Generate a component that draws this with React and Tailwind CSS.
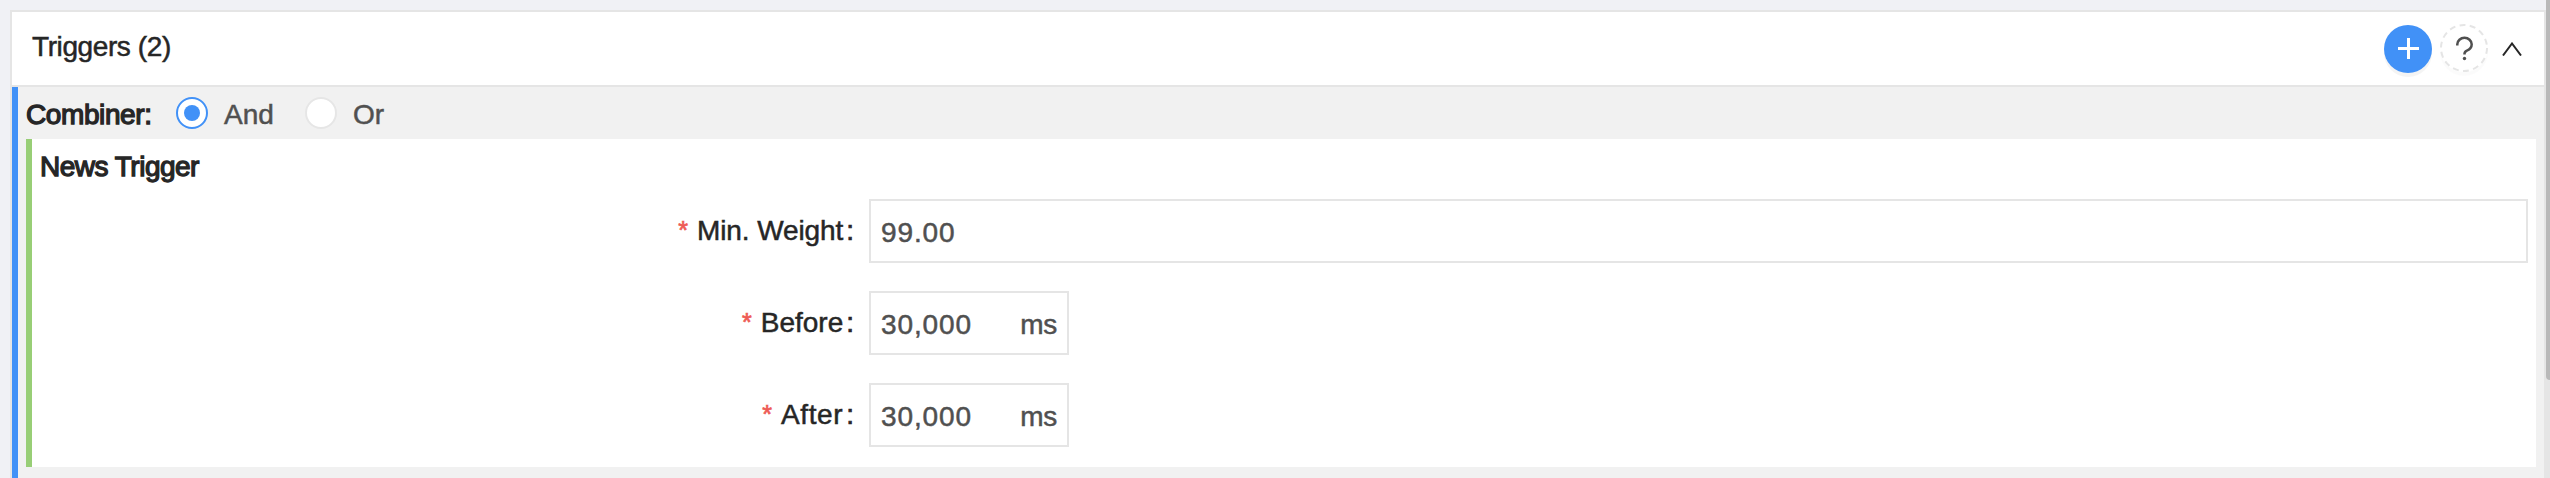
import React, { useState } from 'react';

const COMBINERS = [
  { name: 'And', className: 'mr-[33px] w-[48px]' },
  { name: 'Or', className: '' },
];

const FIELDS = [
  { label: 'Min. Weight', value: '99.00', tracking: 'tracking-[-0.1px]' },
  { label: 'Before', value: '30,000', unit: 'ms', tracking: '' },
  { label: 'After', value: '30,000', unit: 'ms', tracking: 'tracking-[0.6px]' },
];

const Radio = ({ checked }) => (
  <span
    className={`flex h-8 w-8 shrink-0 items-center justify-center rounded-full border-2 bg-white ${
      checked ? 'border-[#4191f7]' : 'border-[#e6e6e6]'
    }`}
  >
    {checked && <span className="h-4 w-4 rounded-full bg-[#4191f7]" />}
  </span>
);

const Field = ({ label, value, unit, tracking }) => (
  <div className="flex h-16">
    <label className="flex w-[837px] shrink-0 items-start justify-end pr-[15px] pt-[12px] leading-10 text-[#262626]">
      <span className="mr-[9px] text-[25px] leading-[38px] text-[#ee5b56] [-webkit-text-stroke:0.7px]">*</span>
      <span className={tracking}>{label}</span>
      <span className="ml-[3px] [-webkit-text-stroke:0.7px]">:</span>
    </label>
    <div
      className={`flex h-16 items-center border-2 border-[#e5e5e5] pl-[10px] pr-[10px] pt-[3px] text-[#505050] ${
        unit ? 'w-[200px] justify-between' : 'w-[1659px]'
      }`}
    >
      <span className="tracking-[0.9px]">{value}</span>
      {unit && <span className="tracking-[-0.3px]">{unit}</span>}
    </div>
  </div>
);

const App = () => {
  const [combiner, setCombiner] = useState('And');

  return (
    <div className="flex h-[478px] w-[2550px] overflow-hidden bg-[#f0f1f5] pl-[10px] font-['Liberation_Sans',Arial,sans-serif] text-[28px] leading-10 [-webkit-text-stroke:0.5px]">
      <div className="mt-[10px] h-[480px] w-[2536px] shrink-0 border-2 border-[#e5e5e5]">
        {/* Header */}
        <div className="flex h-[75px] justify-between border-b-2 border-[#e5e5e5] bg-white pl-5 pr-[22px]">
          <span className="pt-[15px] tracking-[-0.4px] text-[#262626]">Triggers (2)</span>
          <div className="flex items-start">
            <button className="mt-[13px] h-12 w-12 rounded-full bg-[#4191f7] shadow-[0_4px_0_rgba(0,0,0,0.045)]">
              <svg viewBox="0 0 48 48" className="h-12 w-12" fill="none" stroke="#fff" strokeWidth="3">
                <path d="M24.5 13v21M14 23.5h21" />
              </svg>
            </button>
            <button className="ml-2 mt-3 h-12 w-12 rounded-full shadow-[0_4px_0_rgba(0,0,0,0.015)]">
              <svg viewBox="0 0 48 48" className="h-12 w-12" fill="none">
                <circle cx="24" cy="24" r="23" stroke="#e5e5e5" strokeWidth="2" strokeDasharray="6 4.32" />
                <path
                  d="M17.3 21.5v-1.2a7.2 6.5 0 0 1 14.4 0c0 3.4-2.3 5.3-4.8 6.3-1.6.7-2.4 1.7-2.4 3.2v.6"
                  stroke="#505050"
                  strokeWidth="2.5"
                />
                <circle cx="24.5" cy="34.5" r="1.7" fill="#505050" />
              </svg>
            </button>
            <svg viewBox="0 0 20 14" className="ml-[14px] mt-[30px] h-[14px] w-5" fill="none">
              <path d="M1 13.5L10 1.5l9 12" stroke="#262626" strokeWidth="2" />
            </svg>
          </div>
        </div>

        {/* Trigger group */}
        <div className="h-[420px] border-l-[6px] border-[#4191f7] bg-[#f1f1f1] pl-2 pr-2">
          <div className="flex h-[52px] items-center">
            <span className="w-[150px] pt-[3px] tracking-[-0.4px] text-[#262626] [-webkit-text-stroke:1.3px]">
              Combiner:
            </span>
            {COMBINERS.map(({ name, className }) => (
              <button
                key={name}
                className="flex items-center gap-4 text-[#505050]"
                onClick={() => setCombiner(name)}
              >
                <Radio checked={combiner === name} />
                <span className={`pt-[3px] text-left ${className}`}>{name}</span>
              </button>
            ))}
          </div>

          <div className="h-[328px] border-l-[6px] border-[#98ce76] bg-white">
            <div className="h-[60px] pl-2 pt-2 tracking-[-0.5px] text-[#262626] [-webkit-text-stroke:1.3px]">
              News Trigger
            </div>
            <div className="flex flex-col gap-7">
              {FIELDS.map(field => (
                <Field key={field.label} {...field} />
              ))}
            </div>
          </div>
        </div>
      </div>

      {/* Scrollbar */}
      <div className="h-full w-1 shrink-0 bg-[#e5e5e5]">
        <div className="h-[380px] rounded-bl bg-[#b9b9b9]" />
      </div>
    </div>
  );
};

export default App;
